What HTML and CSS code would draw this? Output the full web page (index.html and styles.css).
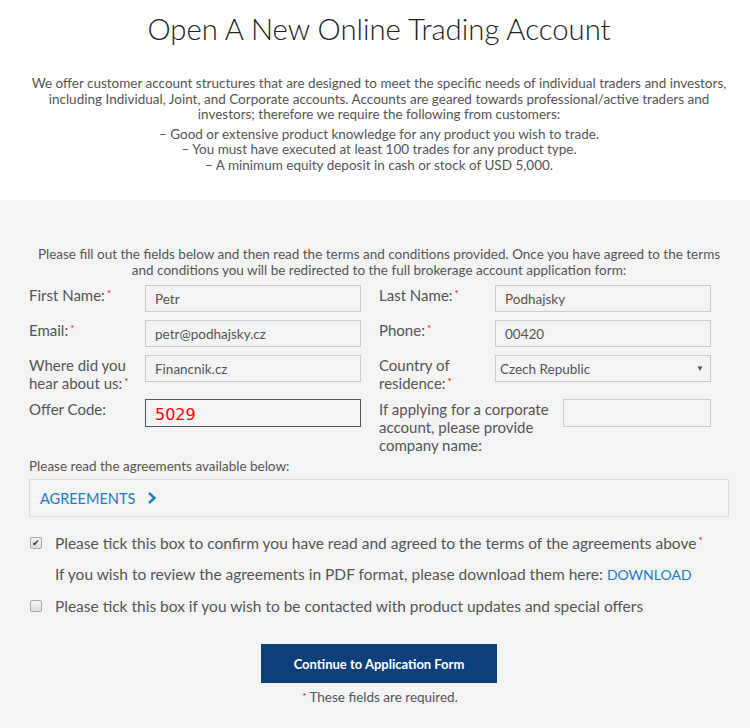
FILE: index.html
```html
<!DOCTYPE html>
<html lang="en">
<head>
<meta charset="UTF-8" />
<title>Open A New Online Trading Account</title>
<link rel="stylesheet" href="styles.css">
</head>
<body>
<div class="intro">
  <h1>Open A New Online Trading Account</h1>
  <p class="lead">We offer customer account structures that are designed to meet the specific needs of individual traders and investors, including Individual, Joint, and Corporate accounts. Accounts are geared towards professional/active traders and investors; therefore we require the following from customers:</p>
  <ul class="reqs">
    <li>– Good or extensive product knowledge for any product you wish to trade.</li>
    <li>– You must have executed at least 100 trades for any product type.</li>
    <li>– A minimum equity deposit in cash or stock of USD 5,000.</li>
  </ul>
</div>

<div class="form-area">
  <p class="note">Please fill out the fields below and then read the terms and conditions provided. Once you have agreed to the terms and conditions you will be redirected to the full brokerage account application form:</p>

  <div class="fields">
    <div class="field">
      <label>First Name:<span class="req">*</span></label>
      <input type="text" value="Petr" />
    </div>
    <div class="field">
      <label>Last Name:<span class="req">*</span></label>
      <input type="text" value="Podhajsky" />
    </div>
    <div class="field">
      <label>Email:<span class="req">*</span></label>
      <input type="text" value="petr@podhajsky.cz" />
    </div>
    <div class="field">
      <label>Phone:<span class="req">*</span></label>
      <input type="text" value="00420" />
    </div>
    <div class="field">
      <label>Where did you<br><span>hear about us:</span><span class="req">*</span></label>
      <input type="text" value="Financnik.cz" />
    </div>
    <div class="field">
      <label>Country of<br><span>residence:</span><span class="req">*</span></label>
      <div class="select-wrap">
        <select><option>Czech Republic</option></select>
      </div>
    </div>
    <div class="field">
      <label>Offer Code:</label>
      <input type="text" class="offer" value="5029" />
    </div>
    <div class="field wide-label">
      <label>If applying for a corporate account, please provide company name:</label>
      <input type="text" value="" />
    </div>
  </div>

  <p class="small">Please read the agreements available below:</p>
  <div class="agreements">
    <a href="#">AGREEMENTS</a>
    <svg width="10" height="14" viewBox="0 0 10 14"><path d="M2 2 L7.5 7 L2 12" fill="none" stroke="#1a7dc4" stroke-width="2.4"/></svg>
  </div>

  <div class="check-row first">
    <span class="box">✔</span>
    <span>Please tick this box to confirm you have read and agreed to the terms of the agreements above<span class="req">*</span></span>
  </div>
  <div class="check-row sub">
    <span>If you wish to review the agreements in PDF format, please download them here: <a href="#">DOWNLOAD</a></span>
  </div>
  <div class="check-row">
    <span class="box"></span>
    <span>Please tick this box if you wish to be contacted with product updates and special offers</span>
  </div>

  <div class="actions">
    <button>Continue to Application Form</button>
    <p class="required"><span class="req">*</span> These fields are required.</p>
  </div>
</div>
</body>
</html>
```

FILE: styles.css
```css
* {
  box-sizing: border-box;
}
body {
  margin: 0;
  font-family: Lato, "Open Sans", sans-serif;
  color: #555;
  background: #f4f4f4;
}
.intro {
  background: #fff;
  height: 200px;
  padding: 9px 21px 0 29px;
  text-align: center;
}
h1 {
  margin: 0;
  font-size: 29.3px;
  font-weight: 300;
  line-height: 40px;
  color: #222;
}
.lead {
  margin: 27px 0 0;
  font-size: 13.5px;
  line-height: 15.5px;
}
.reqs {
  list-style: none;
  margin: 4px 0 0;
  padding: 0;
  font-size: 13.5px;
  line-height: 15.5px;
}
.form-area {
  padding: 46px 21px 20px 29px;
}
.note {
  margin: 0 0 7px;
  font-size: 13.5px;
  line-height: 16px;
  text-align: center;
}
.fields {
  display: grid;
  grid-template-columns: 332px 332px;
  column-gap: 18px;
  row-gap: 8px;
}
.field {
  display: flex;
  align-items: flex-start;
}
.field label {
  width: 116px;
  font-size: 15px;
  line-height: 18px;
  margin: 1px 0 -1px;
}
.field input,
.field .select-wrap {
  width: 216px;
  height: 27px;
  flex: none;
}
.field input,
.field select {
  border: 1px solid #ccc;
  background: #f4f4f4;
  font-family: inherit;
  font-size: 13.5px;
  color: #555;
  padding: 0 9px;
  margin: 0;
}
.field input.offer {
  border: 1px solid #555;
  color: #f00;
  font-family: "DejaVu Sans", sans-serif;
  font-size: 16px;
  padding: 2px 9px 0;
  height: 28px;
}
.wide-label label {
  width: 185px;
}
.wide-label input {
  width: 148px;
  height: 28px;
}
.req {
  position: relative;
  top: 2px;
  color: #e00;
  font-size: 10px;
  vertical-align: top;
  line-height: 1;
  margin-left: 2px;
}
.select-wrap {
  position: relative;
}
.select-wrap select {
  width: 100%;
  height: 100%;
  appearance: none;
  padding: 0 4px;
}
.select-wrap::after {
  content: "▼";
  position: absolute;
  right: 7px;
  top: 8px;
  font-size: 8px;
  color: #555;
}
.small {
  margin: 6px 0 5px;
  font-size: 13.5px;
  line-height: 15px;
}
.agreements {
  border: 1px solid #ddd;
  height: 38px;
  width: 700px;
  padding: 0 10px;
  display: flex;
  align-items: center;
  gap: 12px;
}
.agreements a,
.check-row a {
  color: #1a7dc4;
  text-decoration: none;
}
.agreements a {
  font-size: 14.5px;
}
.check-row {
  display: flex;
  align-items: center;
  font-size: 15.5px;
  line-height: 20px;
  margin-top: 11px;
}
.check-row a {
  font-size: 14px;
}
.check-row.sub {
  padding-left: 26px;
}
.check-row.first {
  margin-top: 16px;
}
.box {
  flex: none;
  width: 12px;
  height: 12px;
  margin: 0 13px 0 1px;
  border: 1px solid #aaa;
  border-radius: 2px;
  background: linear-gradient(#f4f4f4, #ddd);
  font-size: 9px;
  line-height: 10px;
  text-align: center;
  color: #333;
}
.actions {
  margin-top: 28px;
  text-align: center;
}
button {
  width: 236px;
  height: 39px;
  background: #0d3f7a;
  color: #fff;
  border: none;
  font-family: inherit;
  font-size: 13px;
  font-weight: 700;
}
.required {
  margin: 6px 0 0;
  font-size: 13.5px;
}
```
